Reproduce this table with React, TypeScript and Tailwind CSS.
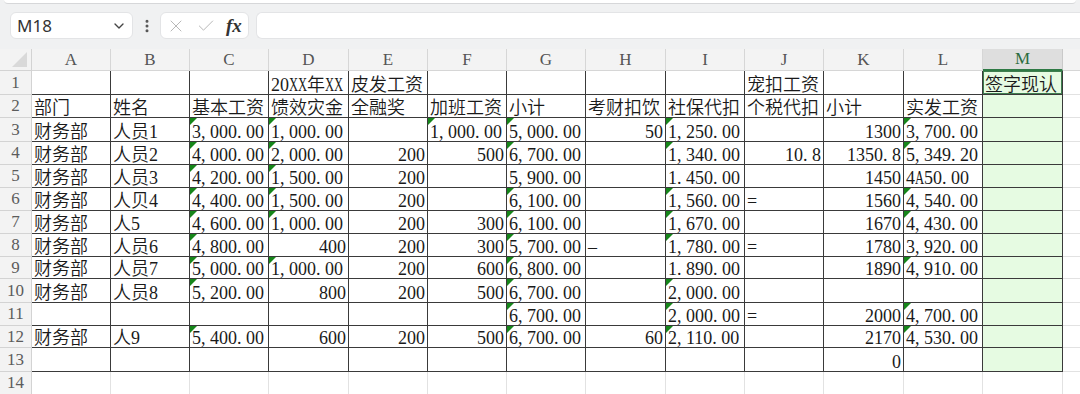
import React from 'react';
import { ChevronDown, EllipsisVertical, X, Check } from 'lucide-react';

const GRID =
  'grid grid-rows-1 grid-cols-[32px_79px_79px_79px_80px_79px_79px_79px_80px_79px_79px_80px_79px_80px_1fr]';

const LETTERS = ['A', 'B', 'C', 'D', 'E', 'F', 'G', 'H', 'I', 'J', 'K', 'L', 'M'];

const ROW_H = [
  'h-[24px]', 'h-[23px]', 'h-[24px]', 'h-[23px]', 'h-[23px]', 'h-[23px]', 'h-[23px]',
  'h-[23px]', 'h-[22px]', 'h-[24px]', 'h-[23px]', 'h-[22px]', 'h-[24px]',
];

// "^" = number stored as text (green corner), ">" = real number (right aligned)
const ROWS: string[][] = [
  ['', '', '', '20XX年XX', '皮发工资', '', '', '', '', '宠扣工资', '', '', '签字现认'],
  ['部门', '姓名', '基本工资', '馈效灾金', '全融奖', '加班工资', '小计', '考财扣饮', '社保代扣', '个税代扣', '小计', '实发工资', ''],
  ['财务部', '人员1', '^3,000.00', '^1,000.00', '', '^1,000.00', '^5,000.00', '>50', '^1,250.00', '', '>1300', '^3,700.00', ''],
  ['财务部', '人员2', '^4,000.00', '^2,000.00', '>200', '>500', '^6,700.00', '', '^1,340.00', '>10.8', '>1350.8', '^5,349.20', ''],
  ['财务部', '人员3', '^4,200.00', '^1,500.00', '>200', '', '5,900.00', '', '1.450.00', '', '>1450', '4A50.00', ''],
  ['财务部', '人贝4', '^4,400.00', '^1,500.00', '>200', '', '^6,100.00', '', '^1,560.00', '=', '>1560', '^4,540.00', ''],
  ['财务部', '人5', '^4,600.00', '^1,000.00', '>200', '>300', '^6,100.00', '', '^1,670.00', '', '>1670', '^4,430.00', ''],
  ['财务部', '人员6', '^4,800.00', '>400', '>200', '>300', '^5,700.00', '–', '^1,780.00', '=', '>1780', '3,920.00', ''],
  ['财务部', '人员7', '^5,000.00', '^1,000.00', '>200', '>600', '^6,800.00', '', '1.890.00', '', '>1890', '^4,910.00', ''],
  ['财务部', '人员8', '^5,200.00', '>800', '>200', '>500', '^6,700.00', '', '^2,000.00', '', '', '', ''],
  ['', '', '', '', '', '', '^6,700.00', '', '^2,000.00', '=', '>2000', '^4,700.00', ''],
  ['财务部', '人9', '^5,400.00', '>600', '>200', '>500', '^6,700.00', '>60', '^2,110.00', '', '>2170', '^4,530.00', ''],
  ['', '', '', '', '', '', '', '', '', '', '>0', '', ''],
];

// half-width look: punctuation and letters take one digit cell
const Txt: React.FC<{ s: string }> = ({ s }) => (
  <>
    {Array.from(s).map((ch, i) =>
      ch === ',' || ch === '.' ? (
        <span key={i} className="inline-block w-[9px] text-left">{ch}</span>
      ) : /[A-Za-z]/.test(ch) ? (
        <span key={i} className="inline-block w-[9px] origin-left scale-x-[0.7] text-left">{ch}</span>
      ) : (
        <React.Fragment key={i}>{ch}</React.Fragment>
      )
    )}
  </>
);

const Cell: React.FC<{ v: string; col: number; row: number }> = ({ v, col, row }) => {
  const tri = v.startsWith('^');
  const right = v.startsWith('>');
  const text = tri || right ? v.slice(1) : v;
  const isM = col === 12;
  return (
    <div
      className={`relative flex items-end overflow-hidden whitespace-nowrap border-r border-b border-[#3a3a3a] px-[2px] font-[350] text-[#1a1a1a] ${
        right ? 'justify-end' : 'justify-start'
      } ${isM ? 'bg-[#e6fbe2]' : 'bg-white'}`}
    >
      {tri && (
        <span className="absolute left-0 top-0 h-0 w-0 border-t-[7px] border-r-[7px] border-t-[#16861a] border-r-transparent" />
      )}
      {isM && row === 0 && <span className="absolute inset-0 border border-[#3f7e4f]" />}
      <span className="block h-[18px] leading-[18px]">
        <Txt s={text} />
      </span>
    </div>
  );
};

const App: React.FC = () => {
  return (
    <div className="w-[1080px] h-[394px] overflow-hidden bg-[#f0f1f2] font-['Liberation_Serif','Noto_Sans_CJK_SC',serif] text-[18px]">
      {/* ribbon edge */}
      <div className="h-[4px] px-[4px]">
        <div className="h-full rounded-b-[6px] border-b border-[#d6d7d9] bg-white" />
      </div>

      {/* formula bar */}
      <div className="flex h-[45px] items-start pl-[10px] pt-[8px]">
        <div className="flex h-[27px] w-[123px] items-center justify-between rounded-[6px] border border-[#e3e4e6] bg-white pl-[6px] pr-[5px]">
          <span className="font-['Noto_Sans',sans-serif] text-[17px] leading-none text-[#333]">M18</span>
          <ChevronDown size={16} strokeWidth={2} className="text-[#444]" />
        </div>
        <div className="flex h-[27px] w-[27px] items-center justify-center text-[#555]">
          <EllipsisVertical size={16} strokeWidth={2.5} />
        </div>
        <div className="flex h-[27px] w-[89px] items-center gap-[10px] rounded-[6px] border border-[#e3e4e6] bg-white pl-[5px]">
          <X size={20} strokeWidth={1.2} className="text-[#b8b8b8]" />
          <Check size={20} strokeWidth={1.2} className="text-[#b8b8b8]" />
          <span className="text-[19px] italic font-bold leading-none text-[#333]">fx</span>
        </div>
        <div className="ml-[7px] h-[27px] flex-1 rounded-l-[6px] border border-r-0 border-[#e3e4e6] bg-white" />
      </div>

      {/* column headers */}
      <div className={`${GRID} h-[22px] text-[17px] text-[#555]`}>
        <div className="flex items-end justify-end border-r border-b border-[#d3d3d3] bg-[#f3f3f3] pb-[3px] pr-[4px]">
          <span className="h-0 w-0 border-l-[15px] border-b-[15px] border-l-transparent border-b-[#d9d9d9]" />
        </div>
        {LETTERS.map((l) =>
          l === 'M' ? (
            <div
              key={l}
              className="flex items-center justify-center border-r border-b-2 border-r-[#c9c9c9] border-b-[#2f7a45] bg-[#dedede] text-[#2c6c40]"
            >
              {l}
            </div>
          ) : (
            <div key={l} className="flex items-center justify-center border-r border-b border-[#d6d6d6] bg-[#f3f3f3]">
              {l}
            </div>
          )
        )}
        <div className="border-b border-[#d6d6d6] bg-[#f3f3f3]" />
      </div>

      {/* sheet */}
      {ROWS.map((r, ri) => (
        <div key={ri} className={`${GRID} ${ROW_H[ri]}`}>
          <div className="flex items-center justify-center border-r border-b border-[#d3d3d3] bg-[#f3f3f3] text-[17px] text-[#5c5c5c]">
            {ri + 1}
          </div>
          {r.map((v, ci) => (
            <Cell key={ci} v={v} col={ci} row={ri} />
          ))}
          <div className="border-b border-[#e2e2e2] bg-white" />
        </div>
      ))}

      <div className={`${GRID} h-[22px]`}>
        <div className="flex items-center justify-center border-r border-[#d3d3d3] bg-[#f3f3f3] text-[17px] text-[#5c5c5c]">
          14
        </div>
        {LETTERS.map((l) => (
          <div key={l} className="border-r border-[#e2e2e2] bg-white" />
        ))}
        <div className="bg-white" />
      </div>
    </div>
  );
};

export default App;
